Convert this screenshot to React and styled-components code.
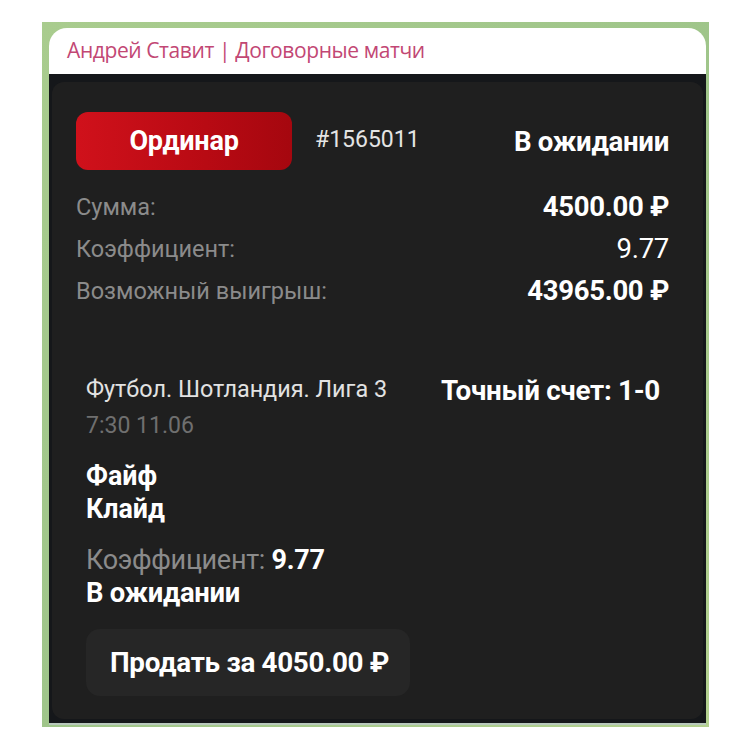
import React from "react";
import styled, { createGlobalStyle } from "styled-components";

const GlobalStyle = createGlobalStyle`
  body {
    margin: 0;
    background: #ffffff;
    font-family: Roboto, "Noto Sans", "Liberation Sans", sans-serif;
  }
`;

const Frame = styled.div`
  margin: 22px 0 0 42px;
  width: 667px;
  height: 705px;
  box-sizing: border-box;
  padding: 6px 3px 2px 7px;
  background: linear-gradient(135deg, #a9cc8e 0%, #9fc58a 50%, #b4d190 100%);
  display: flex;
  flex-direction: column;
`;

const Header = styled.div`
  height: 46px;
  background: #ffffff;
  border-radius: 18px 18px 0 0;
  display: flex;
  align-items: center;
  padding: 0 18px 2px;
  box-sizing: border-box;
  color: #c24774;
  font-family: "Open Sans", Roboto, sans-serif;
  font-size: 21px;
  letter-spacing: -0.4px;
`;

const Chat = styled.div`
  flex: 1;
  background: #15171a;
  padding: 8px 3px 4px 3px;
  display: flex;
  border-bottom: 2px solid #b9c9bd;
`;

const Card = styled.div`
  flex: 1;
  background: #1f1f1f;
  border-radius: 12px;
  padding: 30px 34px 0 24px;
  color: #ffffff;
`;

const TopRow = styled.div`
  display: flex;
  align-items: center;
`;

const TypeBadge = styled.div`
  width: 216px;
  height: 58px;
  border-radius: 12px;
  background: linear-gradient(90deg, #d0111b 0%, #b80a13 60%, #a5070f 100%);
  display: flex;
  align-items: center;
  justify-content: center;
  font-size: 27px;
  font-weight: 700;
  letter-spacing: -0.2px;
`;

const BetId = styled.div`
  margin-left: 23px;
  margin-top: -4px;
  font-size: 23px;
  color: #e4e4e4;
`;

const Status = styled.div`
  margin-left: auto;
  font-size: 27.6px;
  font-weight: 700;
  letter-spacing: -0.3px;
`;

const Rows = styled.div`
  margin-top: 16px;
`;

const Row = styled.div`
  display: flex;
  justify-content: space-between;
  align-items: center;
  height: 42px;
`;

const Label = styled.span`
  color: #8b8b8b;
  font-size: 23.5px;
  line-height: 30px;
`;

const Value = styled.span`
  font-size: 27.5px;
  line-height: 32px;
  letter-spacing: -0.3px;
  font-weight: ${(p) => (p.$bold ? 700 : 400)};
`;

const Event = styled.div`
  margin-top: 64px;
  padding-left: 10px;
`;

const EventHead = styled.div`
  display: flex;
  justify-content: space-between;
  align-items: flex-start;
  padding-right: 9px;
`;

const League = styled.div`
  font-size: 23.4px;
  color: #e2e2e2;
  line-height: 26px;
`;

const Market = styled.div`
  font-size: 27.8px;
  font-weight: 700;
  line-height: 30px;
  letter-spacing: -0.3px;
`;

const Time = styled.div`
  margin-top: 13px;
  font-size: 23px;
  line-height: 22px;
  color: #6f6f6f;
`;

const Teams = styled.div`
  margin-top: 23px;
  font-size: 26.8px;
  font-weight: 700;
  line-height: 33px;
`;

const Odds = styled.div`
  margin-top: 18px;
  font-size: 27px;
  line-height: 33px;
  color: #8b8b8b;
  letter-spacing: -0.3px;

  b {
    color: #ffffff;
  }
`;

const BetStatus = styled.div`
  font-size: 27.4px;
  font-weight: 700;
  line-height: 33px;
  letter-spacing: -0.3px;
`;

const SellButton = styled.div`
  margin-top: 19px;
  width: 324px;
  height: 67px;
  border-radius: 14px;
  background: #262626;
  display: flex;
  align-items: center;
  padding-left: 24px;
  box-sizing: border-box;
  font-size: 27.8px;
  font-weight: 700;
  letter-spacing: -0.3px;
`;

export default function App() {
  return (
    <>
      <GlobalStyle />
      <Frame>
        <Header>Андрей Ставит | Договорные матчи</Header>
        <Chat>
          <Card>
            <TopRow>
              <TypeBadge>Ординар</TypeBadge>
              <BetId>#1565011</BetId>
              <Status>В ожидании</Status>
            </TopRow>
            <Rows>
              <Row>
                <Label>Сумма:</Label>
                <Value $bold>4500.00 ₽</Value>
              </Row>
              <Row>
                <Label>Коэффициент:</Label>
                <Value>9.77</Value>
              </Row>
              <Row>
                <Label>Возможный выигрыш:</Label>
                <Value $bold>43965.00 ₽</Value>
              </Row>
            </Rows>
            <Event>
              <EventHead>
                <div>
                  <League>Футбол. Шотландия. Лига 3</League>
                  <Time>7:30 11.06</Time>
                </div>
                <Market>Точный счет: 1-0</Market>
              </EventHead>
              <Teams>
                Файф
                <br />
                Клайд
              </Teams>
              <Odds>
                Коэффициент: <b>9.77</b>
              </Odds>
              <BetStatus>В ожидании</BetStatus>
              <SellButton>Продать за 4050.00 ₽</SellButton>
            </Event>
          </Card>
        </Chat>
      </Frame>
    </>
  );
}
